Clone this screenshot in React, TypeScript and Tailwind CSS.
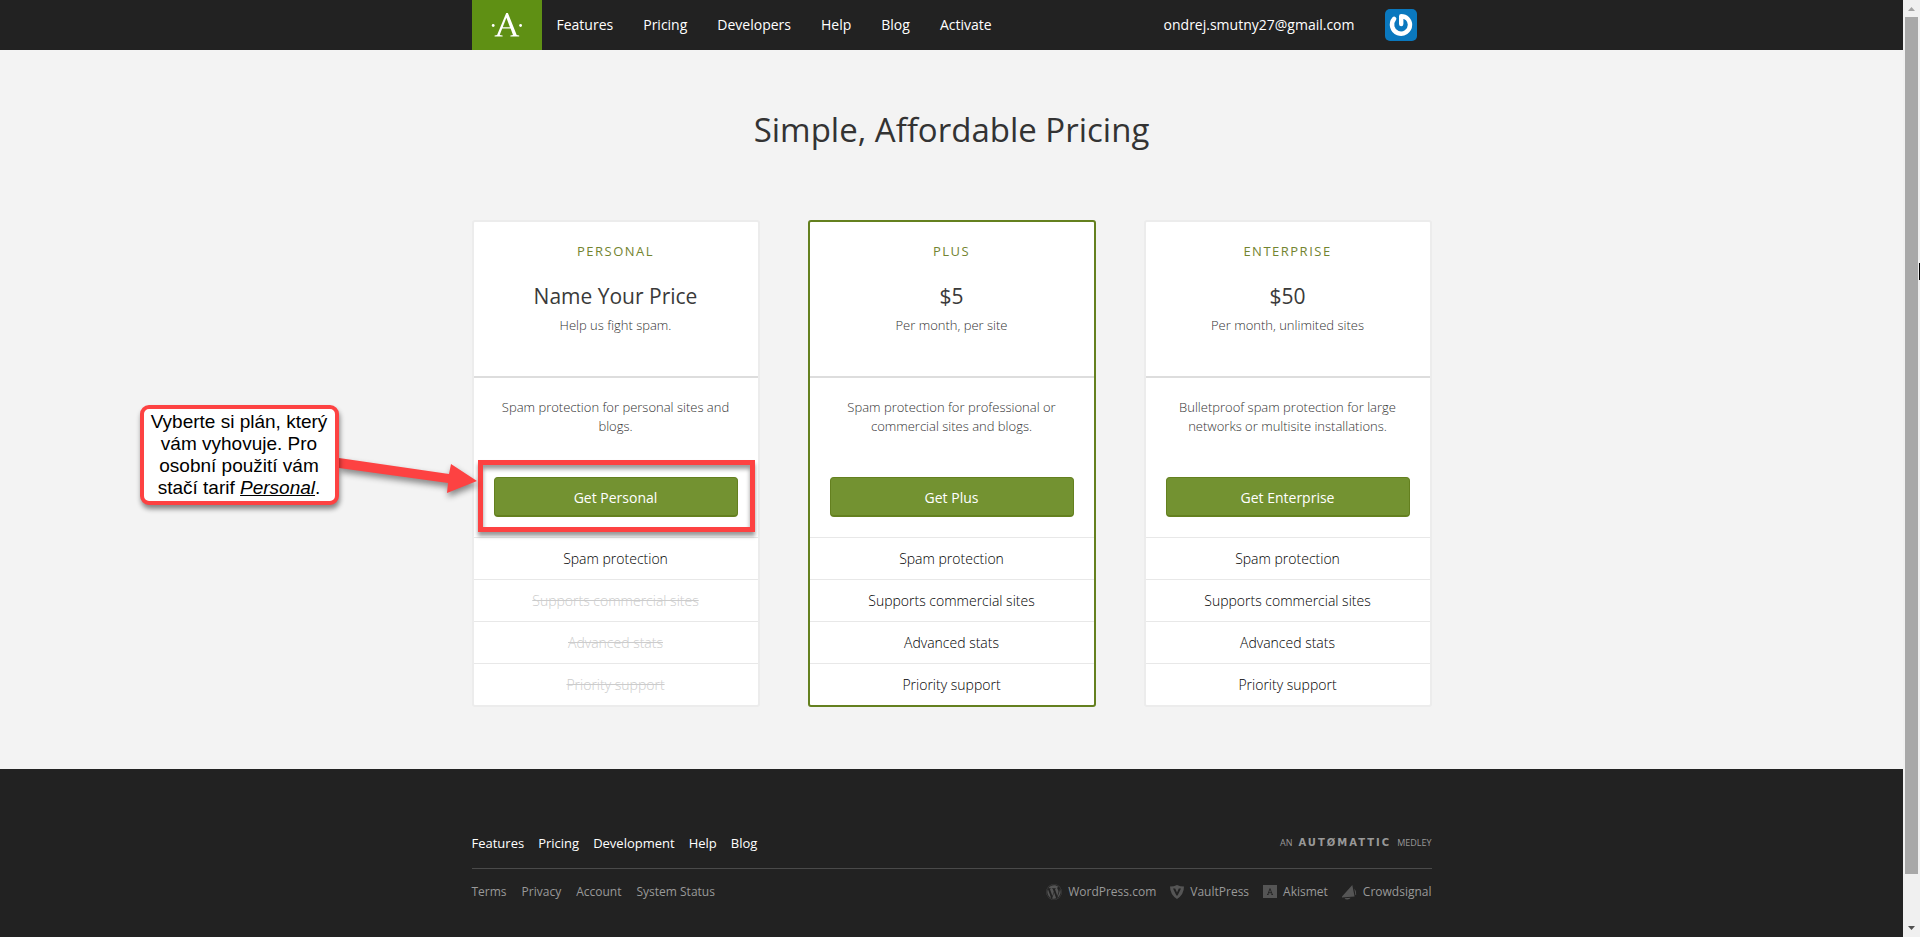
import React from "react";
import { FaWordpress } from "react-icons/fa";

type Plan = {
  name: string;
  price: string;
  terms: string;
  description: string;
  action: string;
  included: number;
  featured?: boolean;
};

const features = ["Spam protection", "Supports commercial sites", "Advanced stats", "Priority support"];

const plans: Plan[] = [
  {
    name: "Personal",
    price: "Name Your Price",
    terms: "Help us fight spam.",
    description: "Spam protection for personal sites and blogs.",
    action: "Get Personal",
    included: 1,
  },
  {
    name: "Plus",
    price: "$5",
    terms: "Per month, per site",
    description: "Spam protection for professional or commercial sites and blogs.",
    action: "Get Plus",
    included: 4,
    featured: true,
  },
  {
    name: "Enterprise",
    price: "$50",
    terms: "Per month, unlimited sites",
    description: "Bulletproof spam protection for large networks or multisite installations.",
    action: "Get Enterprise",
    included: 4,
  },
];

function Avatar() {
  return (
    <svg viewBox="0 0 32 32" className="size-8" role="img" aria-label="Profile">
      <rect width="32" height="32" rx="5" fill="#0a78be" />
      <path
        d="M16.2 15V7.2C21.4 7.2 25 11 25 15.8a9 9 0 1 1-15.8-6"
        fill="none"
        stroke="#fff"
        strokeWidth="4.4"
        strokeLinecap="round"
        strokeLinejoin="round"
      />
    </svg>
  );
}

function VaultPressIcon() {
  return (
    <svg viewBox="0 0 14 14" className="size-3.5" aria-hidden="true">
      <path d="M0 1.6Q3.8 1.5 7 0q3.200 1.500 7 1.600Q14 9.800 7 14 0 9.800 0 1.600Z" fill="#555" />
      <path d="M3 3.600h2.200L7 7.600l1.800-4H11L7.600 10.500H6.400Z" fill="#222" />
    </svg>
  );
}

function AkismetIcon() {
  return (
    <svg viewBox="0 0 14 14" className="size-3.5" aria-hidden="true">
      <rect width="14" height="13" fill="#555" />
      <path d="M4 9.500h1.600M8.400 9.500H10M4.800 9.500 7 3.600l2.300 5.900M5.600 7.700h2.800" fill="none" stroke="#222" strokeWidth=".9" />
    </svg>
  );
}

function CrowdsignalIcon() {
  return (
    <svg viewBox="0 0 15 15" className="size-[15px]" aria-hidden="true">
      <path d="M10.300 0 12.600 11.600 0 12.400Q-.2 11.700.7 10.800Z" fill="#555" />
      <path d="M12.300 3.600Q14.600 6 14.200 9.800l-.8.300ZM2.600 13.200l6-.5Q7.800 14.500 5.300 14.500 3 14.500 2.600 13.200Z" fill="#555" />
    </svg>
  );
}

function Header() {
  return (
    <header className="bg-[#222] font-['Open_Sans',sans-serif] text-sm text-white">
      <div className="mx-auto flex h-[50px] max-w-[960px] items-center">
        <a href="#home" aria-label="Akismet" className="flex h-full w-[70px] items-center justify-center bg-[#5f9014]">
          <svg viewBox="0 0 32 26" className="h-[26px] w-8" aria-hidden="true">
            <g fill="#fff">
              <circle cx="2.200" cy="13.500" r="1.400" />
              <circle cx="29.600" cy="13.500" r="1.400" />
              <path d="M3.600 24.500v-1.100l2.500-.5L15.200 1h1.700l8.800 21.900 2.500.5v1.100h-8.800v-1.100l2.600-.5-2.400-6.300h-8.400l-2.500 6.300 2.900.5v1.100Z" />
            </g>
            <path d="m11.700 15.200 3.700-9.500 3.600 9.500Z" fill="#5f9014" />
          </svg>
        </a>
        <nav aria-label="Main" className="flex">
          {["Features", "Pricing", "Developers", "Help", "Blog", "Activate"].map((item) => (
            <a key={item} href={"#" + item.toLowerCase()} className="px-[15px]">
              {item}
            </a>
          ))}
        </nav>
        <a href="#account" className="mr-[15px] ml-auto flex items-center gap-[30px]">
          ondrej.smutny27@gmail.com
          <Avatar />
        </a>
      </div>
    </header>
  );
}

function Callout() {
  return (
    <>
      <svg
        viewBox="0 0 140 40"
        className="absolute top-[233px] right-full z-10 -mr-1 h-10 w-[140px] overflow-visible drop-shadow-[1px_4px_3px_rgba(0,0,0,0.45)]"
        aria-hidden="true"
      >
        <path d="m1 3 110 16 2-10 26 17-30 12 1-10L1 13Z" fill="#fd4242" />
      </svg>
      <p className="absolute top-[183px] right-full z-10 mr-[135px] w-[199px] rounded-[9px] border-4 border-[#fd4242] bg-white pt-0.5 pb-0.5 text-center font-['Liberation_Sans',sans-serif] text-[19px] leading-[22px] text-black shadow-[1px_4px_5px_rgba(0,0,0,0.45)]">
        Vyberte si plán, který
        <br />
        vám vyhovuje. Pro
        <br />
        osobní použití vám
        <br />
        stačí tarif <em className="underline">Personal</em>.
      </p>
    </>
  );
}

function PlanCard({ plan, index }: { plan: Plan; index: number }) {
  return (
    <article
      className={
        "relative flex-1 rounded-[3px] border-2 bg-white text-center font-['Open_Sans',sans-serif] " +
        (plan.featured ? "border-[#64801f]" : "border-[#ececec]")
      }
    >
      <div className="h-[156px] border-b-2 border-[#ddd] pt-[19px]">
        <h2 className="text-[13px] leading-5 tracking-[1.5px] text-[#738430] uppercase">{plan.name}</h2>
        <p className="mt-[21px] text-[21px] leading-7 text-[#3a3a3a]">{plan.price}</p>
        <p className="mt-[5px] text-[13px] leading-5 font-light text-[#333]">{plan.terms}</p>
      </div>
      <div className="px-5 pt-5 pb-5">
        <p className="h-[60px] px-2 text-[13px] leading-[19px] font-light text-[#333]">{plan.description}</p>
        <div className="relative mt-[19px]">
          {index === 0 && (
            <div
              aria-hidden="true"
              className="pointer-events-none absolute -top-[17px] -right-[17px] -bottom-[15px] -left-4 border-[5px] border-[#fd4242] shadow-[0_4px_4px_rgba(0,0,0,0.4),inset_0_4px_4px_rgba(0,0,0,0.4)]"
            />
          )}
          <button className="h-10 w-full rounded border border-b-2 border-[#64801f] bg-[#739231] pt-0.5 text-sm text-white">
            {plan.action}
          </button>
        </div>
      </div>
      <ul>
        {features.map((feature, i) => (
          <li
            key={feature}
            className={
              "h-[42px] border-t border-[#e8e8e8] text-sm leading-[42px] font-light " +
              (i < plan.included ? "text-black" : "text-[#ccc] line-through")
            }
          >
            {feature}
          </li>
        ))}
      </ul>
      {index === 0 && <Callout />}
    </article>
  );
}

function Footer() {
  return (
    <footer className="flex-1 bg-[#222] font-['Open_Sans',sans-serif] text-[13px] text-[#999]">
      <div className="mx-auto max-w-[960px] pt-16">
        <div className="flex items-center justify-between border-b border-[#4a4a4a] pb-[15px] leading-5">
          <nav aria-label="Footer" className="flex gap-3.5 text-white">
            {["Features", "Pricing", "Development", "Help", "Blog"].map((item) => (
              <a key={item} href={"#" + item.toLowerCase()}>
                {item}
              </a>
            ))}
          </nav>
          <a href="#automattic" className="flex items-center gap-1.5 text-[9px]">
            AN
            <span className="font-['DejaVu_Sans',sans-serif] text-[10px] font-bold tracking-[2px]">AUTØMATTIC</span>
            MEDLEY
          </a>
        </div>
        <div className="flex items-center justify-between pt-[13px] text-xs leading-5">
          <nav aria-label="Legal" className="flex gap-[15px]">
            {["Terms", "Privacy", "Account", "System Status"].map((item) => (
              <a key={item} href={"#" + item.toLowerCase().replace(" ", "-")}>
                {item}
              </a>
            ))}
          </nav>
          <nav aria-label="Products" className="flex gap-3.5">
            <a href="#wordpress" className="flex items-center gap-1.5">
              <FaWordpress className="size-4 text-[#555]" />
              WordPress.com
            </a>
            <a href="#vaultpress" className="flex items-center gap-1.5">
              <VaultPressIcon />
              VaultPress
            </a>
            <a href="#akismet" className="flex items-center gap-1.5">
              <AkismetIcon />
              Akismet
            </a>
            <a href="#crowdsignal" className="flex items-center gap-1.5">
              <CrowdsignalIcon />
              Crowdsignal
            </a>
          </nav>
        </div>
      </div>
    </footer>
  );
}

function Scrollbar() {
  return (
    <div aria-hidden="true" className="flex w-[17px] flex-col items-center bg-[#f0f0f0]">
      <svg viewBox="0 0 17 17" className="h-[17px] w-[17px]">
        <path d="M5 11h7L8.500 7Z" fill="#a3a3a3" />
      </svg>
      <div className="w-[13px] flex-1 bg-[#a8a8a8]" />
      <div className="h-[46px]" />
      <svg viewBox="0 0 17 17" className="h-[17px] w-[17px]">
        <path d="M5 6h7l-3.500 4Z" fill="#505050" />
      </svg>
    </div>
  );
}

export default function App() {
  return (
    <div className="relative flex min-h-screen bg-[#f3f3f3]">
      <div className="flex min-w-0 flex-1 flex-col">
        <Header />
        <main className="mx-auto w-full max-w-[960px] pb-[62px]">
          <h1 className="pt-[58px] text-center font-['Open_Sans',sans-serif] text-[33px] leading-[44px] text-[#333]">
            Simple, Affordable Pricing
          </h1>
          <div className="mt-[68px] flex gap-12">
            {plans.map((plan, index) => (
              <PlanCard key={plan.name} plan={plan} index={index} />
            ))}
          </div>
        </main>
        <Footer />
      </div>
      <Scrollbar />
      <div aria-hidden="true" className="absolute top-[263px] right-0 h-[17px] w-px bg-black" />
    </div>
  );
}
